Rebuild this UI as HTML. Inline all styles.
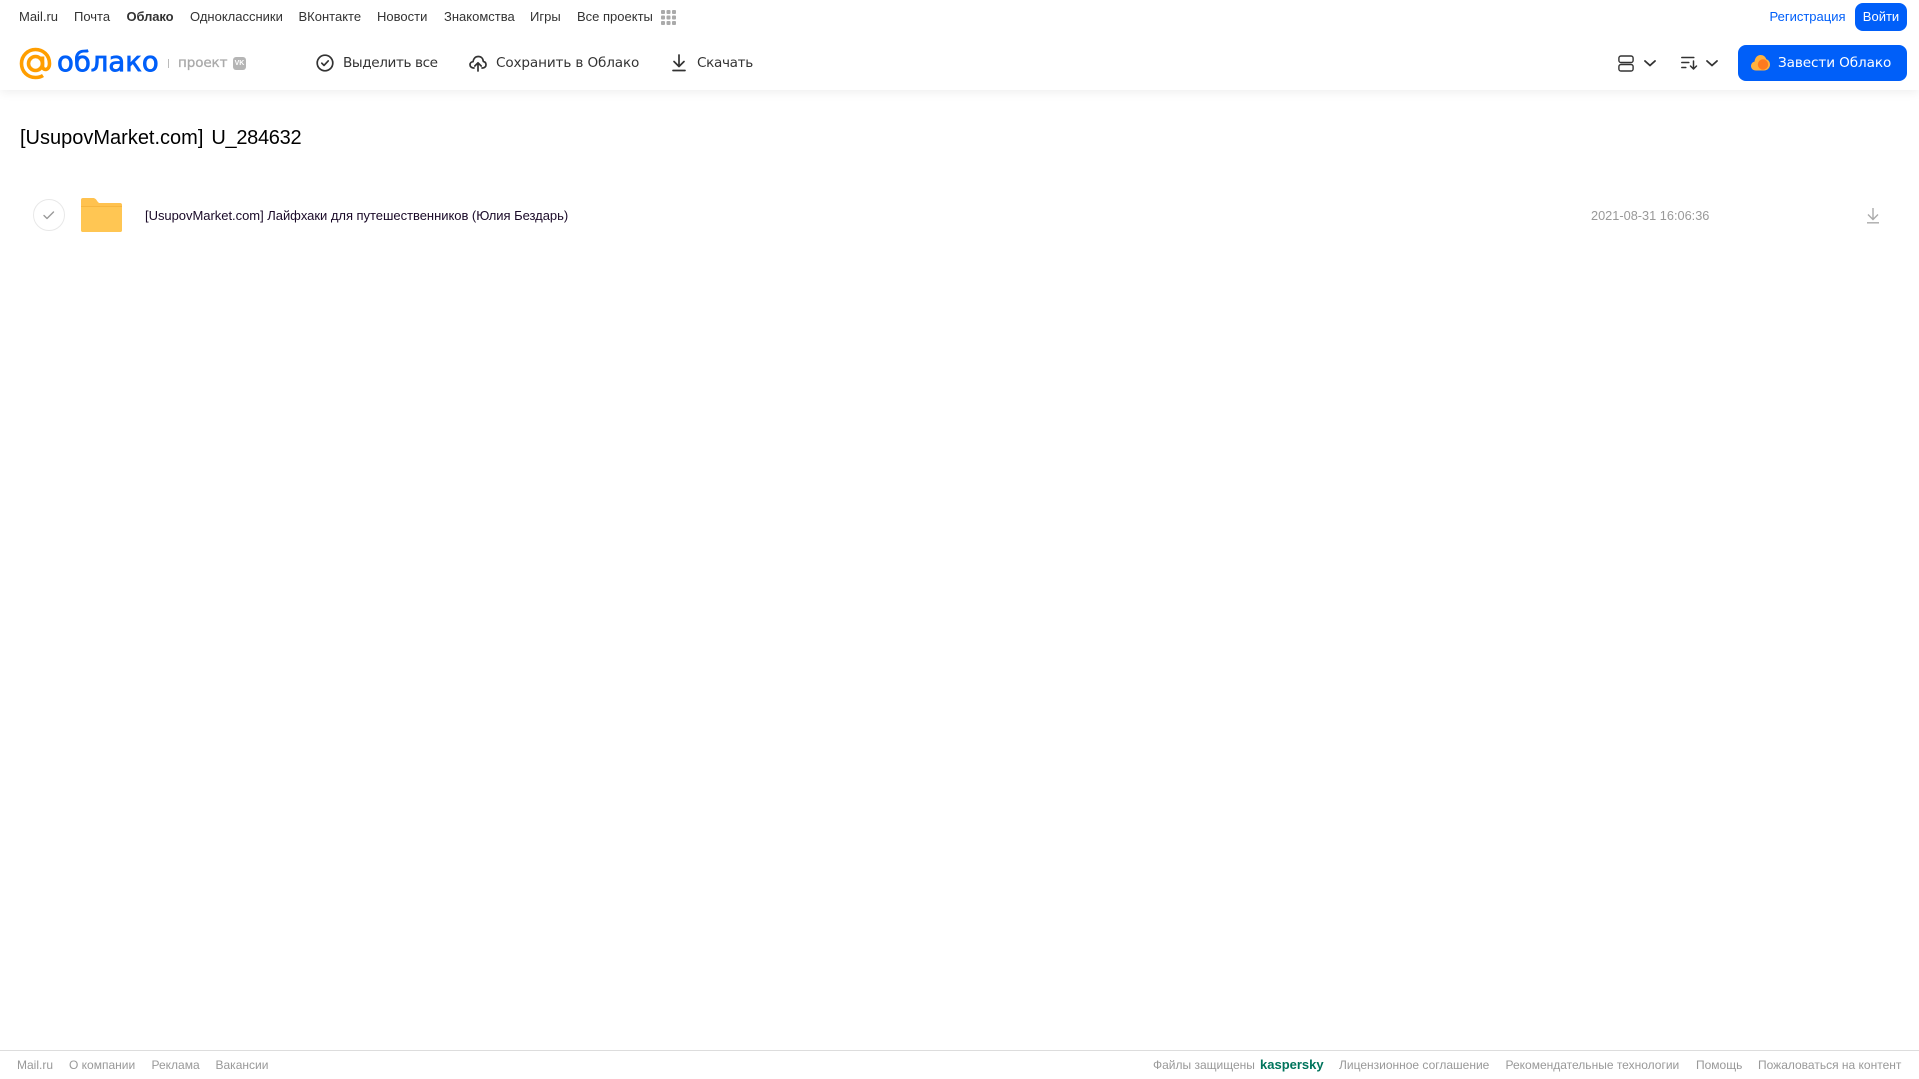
<!DOCTYPE html>
<html lang="ru"><head><meta charset="utf-8"><title>Облако</title>
<style>
html,body{margin:0;padding:0;background:#fff}
body{position:relative;width:1919px;height:1079px;overflow:hidden;font-family:"Liberation Sans",sans-serif}
.t{position:absolute;white-space:nowrap;line-height:20px}
.n{top:7px;font-size:13px;color:#333}
.a{top:53px;color:#333;font-family:"DejaVu Sans",sans-serif;font-size:13.6px}
.f{top:1055px;font-size:12px;color:#999}
svg{position:absolute;overflow:visible}
</style></head><body>
<div style="position:absolute;left:0;top:0;width:1919px;height:90px;background:#fff;box-shadow:0 2px 10px rgba(0,0,0,.07)"></div>
<span class="t n" style="left:19px">Mail.ru</span>
<span class="t n" style="left:74px">Почта</span>
<span class="t n" style="left:126.500px;font-weight:700;letter-spacing:-.1px">Облако</span>
<span class="t n" style="left:190px">Одноклассники</span>
<span class="t n" style="left:298.500px">ВКонтакте</span>
<span class="t n" style="left:377px">Новости</span>
<span class="t n" style="left:444px">Знакомства</span>
<span class="t n" style="left:530px">Игры</span>
<span class="t n" style="left:577px">Все проекты</span>
<svg style="left:661px;top:10px" width="15" height="15" fill="#aaa"><rect width="4" height="4" rx="1"/><rect x="5.500" width="4" height="4" rx="1"/><rect x="11" width="4" height="4" rx="1"/><rect y="5.500" width="4" height="4" rx="1"/><rect x="5.500" y="5.500" width="4" height="4" rx="1"/><rect x="11" y="5.500" width="4" height="4" rx="1"/><rect y="11" width="4" height="4" rx="1"/><rect x="5.500" y="11" width="4" height="4" rx="1"/><rect x="11" y="11" width="4" height="4" rx="1"/></svg>
<span class="t n" style="left:1769.500px;color:#005ff9">Регистрация</span>
<div style="position:absolute;left:1855px;top:3px;width:52px;height:28px;border-radius:8px;background:#005ff9;color:#fff;font-size:13px;line-height:27px;text-align:center">Войти</div>

<svg style="left:19px;top:47px" width="33" height="33" viewBox="0 0 33 33" fill="none" stroke="#ff9e00" stroke-width="3.600"><circle cx="16.500" cy="16.500" r="7"/><path d="M23.500 9.500v9.500c0 5 7 5 7-2.500C30.500 8 24 2.500 16.500 2.500S2.500 8.500 2.500 16.500s6 14 14 14c3 0 5.500-.7 7.500-2"/></svg>
<span class="t" style="left:57px;top:45px;font-family:'DejaVu Sans',sans-serif;font-size:27.500px;line-height:34px;color:#005ff9;-webkit-text-stroke:.8px #005ff9">облако</span>
<div style="position:absolute;left:168px;top:59px;width:1px;height:9px;background:#bbb"></div>
<span class="t" style="left:178px;top:53px;font-family:'DejaVu Sans',sans-serif;font-size:13.500px;color:#aaa;-webkit-text-stroke:.3px #aaa;letter-spacing:-.1px">проект</span>
<div style="position:absolute;left:233px;top:57px;width:13px;height:13px;border-radius:3px;background:#b5b5b5;color:#fff;font-size:7px;font-weight:700;line-height:13px;text-align:center">VK</div>

<svg style="left:316px;top:54px" width="18" height="18" fill="none" stroke="#333" stroke-width="1.700"><circle cx="9" cy="9" r="7.800"/><path d="M5.800 9.200l2.200 2.200 4.200-4.500" stroke-linecap="round" stroke-linejoin="round"/></svg>
<span class="t a" style="left:343px;letter-spacing:-.4px">Выделить все</span>
<svg style="left:469px;top:55px" width="18" height="17" fill="none" stroke="#333" stroke-width="1.700" stroke-linecap="round" stroke-linejoin="round"><path d="M5 13H4.500C2.500 13 1 11.500 1 9.800 1 8 2.300 6.800 4 6.700 4.500 3.500 6.500 1.500 9.300 1.500c2.800 0 4.800 2 5 5 1.700.3 2.700 1.600 2.700 3.200 0 1.800-1.400 3.300-3.300 3.300H13"/><path d="M9 16V8M5.800 11 9 7.800l3.200 3.200"/></svg>
<span class="t a" style="left:496px;letter-spacing:-.14px">Сохранить в Облако</span>
<svg style="left:672px;top:54px" width="14" height="18" fill="none" stroke="#333" stroke-width="1.700" stroke-linecap="round" stroke-linejoin="round"><path d="M7 1v11M2 7.500l5 5 5-5M1 16.500h12"/></svg>
<span class="t a" style="left:697px;letter-spacing:-.35px">Скачать</span>

<svg style="left:1618px;top:55px" width="16" height="17" fill="none" stroke="#333" stroke-width="1.400"><rect x=".9" y="1" width="14.200" height="6.500" rx="2"/><rect x=".9" y="9.500" width="14.200" height="6.500" rx="2"/></svg>
<svg style="left:1644px;top:60px" width="12" height="7" fill="none" stroke="#333" stroke-width="1.800" stroke-linecap="round" stroke-linejoin="round"><path d="M1 1l5 4.500L11 1"/></svg>
<svg style="left:1681px;top:56px" width="17" height="14" fill="none" stroke="#333" stroke-width="1.500" stroke-linecap="round" stroke-linejoin="round"><path d="M.8 1.500h12M.8 6.500h7M.8 11.500h4M12.500 5v8M9.500 10l3 3 3-3"/></svg>
<svg style="left:1706px;top:60px" width="12" height="7" fill="none" stroke="#333" stroke-width="1.800" stroke-linecap="round" stroke-linejoin="round"><path d="M1 1l5 4.500L11 1"/></svg>
<div style="position:absolute;left:1738px;top:45px;width:169px;height:36px;border-radius:8px;background:#005ff9"></div>
<svg style="left:1751px;top:54px" width="19" height="17"><path d="M5 16.500C2 16.500 0 14.500 0 12c0-2.200 1.500-4 3.500-4.400C4 3.500 6.500 1 9.500 1c2.800 0 5 1.700 5.800 4.200 2.200.6 3.700 2.600 3.700 5.300 0 3.400-2.600 6-6 6z" fill="#ffb23e"/><circle cx="12" cy="10.500" r="5.200" fill="#ff7a1f"/></svg>
<span class="t a" style="left:1778px;color:#fff;letter-spacing:-.1px">Завести Облако</span>

<div class="t" style="left:20px;top:125px;font-size:20px;line-height:26px;color:#000;word-spacing:2.400px">[UsupovMarket.com] <span style="letter-spacing:-.3px">U_284632</span></div>

<div style="position:absolute;left:33px;top:199px;width:30px;height:30px;border-radius:50%;border:1px solid #e8e8e8;background:#fff"></div>
<svg style="left:43px;top:211px" width="12" height="9" fill="none" stroke="#999" stroke-width="1.400" stroke-linecap="round" stroke-linejoin="round"><path d="M1 4.500l3 3 6.500-6.500"/></svg>
<svg style="left:81px;top:198px" width="41" height="34"><path d="M2 0h10c2 0 3 1 4.500 3.500L18 5h21a2 2 0 0 1 2 2v25a2 2 0 0 1-2 2H2a2 2 0 0 1-2-2V2a2 2 0 0 1 2-2z" fill="#ffc24f"/><path d="M0 9h41v23a2 2 0 0 1-2 2H2a2 2 0 0 1-2-2z" fill="#ffc653" opacity=".9"/><path d="M0 8.500h41" stroke="#f7b53f" stroke-width="1"/></svg>
<span class="t" style="left:145px;top:206px;font-size:13px;letter-spacing:-.03px;color:#1a0a28">[UsupovMarket.com] Лайфхаки для путешественников (Юлия Бездарь)</span>
<span class="t" style="left:1591px;top:206px;font-size:12.750px;color:#999">2021-08-31 16:06:36</span>
<svg style="left:1866px;top:207px" width="14" height="17" fill="none" stroke="#aaa" stroke-width="1.400"><path d="M7 1v11M2 7.500l5 5 5-5M1 15.800h12"/></svg>

<div style="position:absolute;left:0;top:1050px;width:1919px;height:1px;background:#ddd"></div>
<span class="t f" style="left:17px">Mail.ru</span>
<span class="t f" style="left:69px">О компании</span>
<span class="t f" style="left:151.500px">Реклама</span>
<span class="t f" style="left:215.500px">Вакансии</span>
<span class="t f" style="left:1153px">Файлы защищены</span>
<span class="t f" style="left:1260px;color:#00745c;font-weight:700;font-size:13px">kaspersky</span>
<span class="t f" style="left:1339px">Лицензионное соглашение</span>
<span class="t f" style="left:1505.500px">Рекомендательные технологии</span>
<span class="t f" style="left:1696px">Помощь</span>
<span class="t f" style="left:1758px">Пожаловаться на контент</span>
</body></html>
